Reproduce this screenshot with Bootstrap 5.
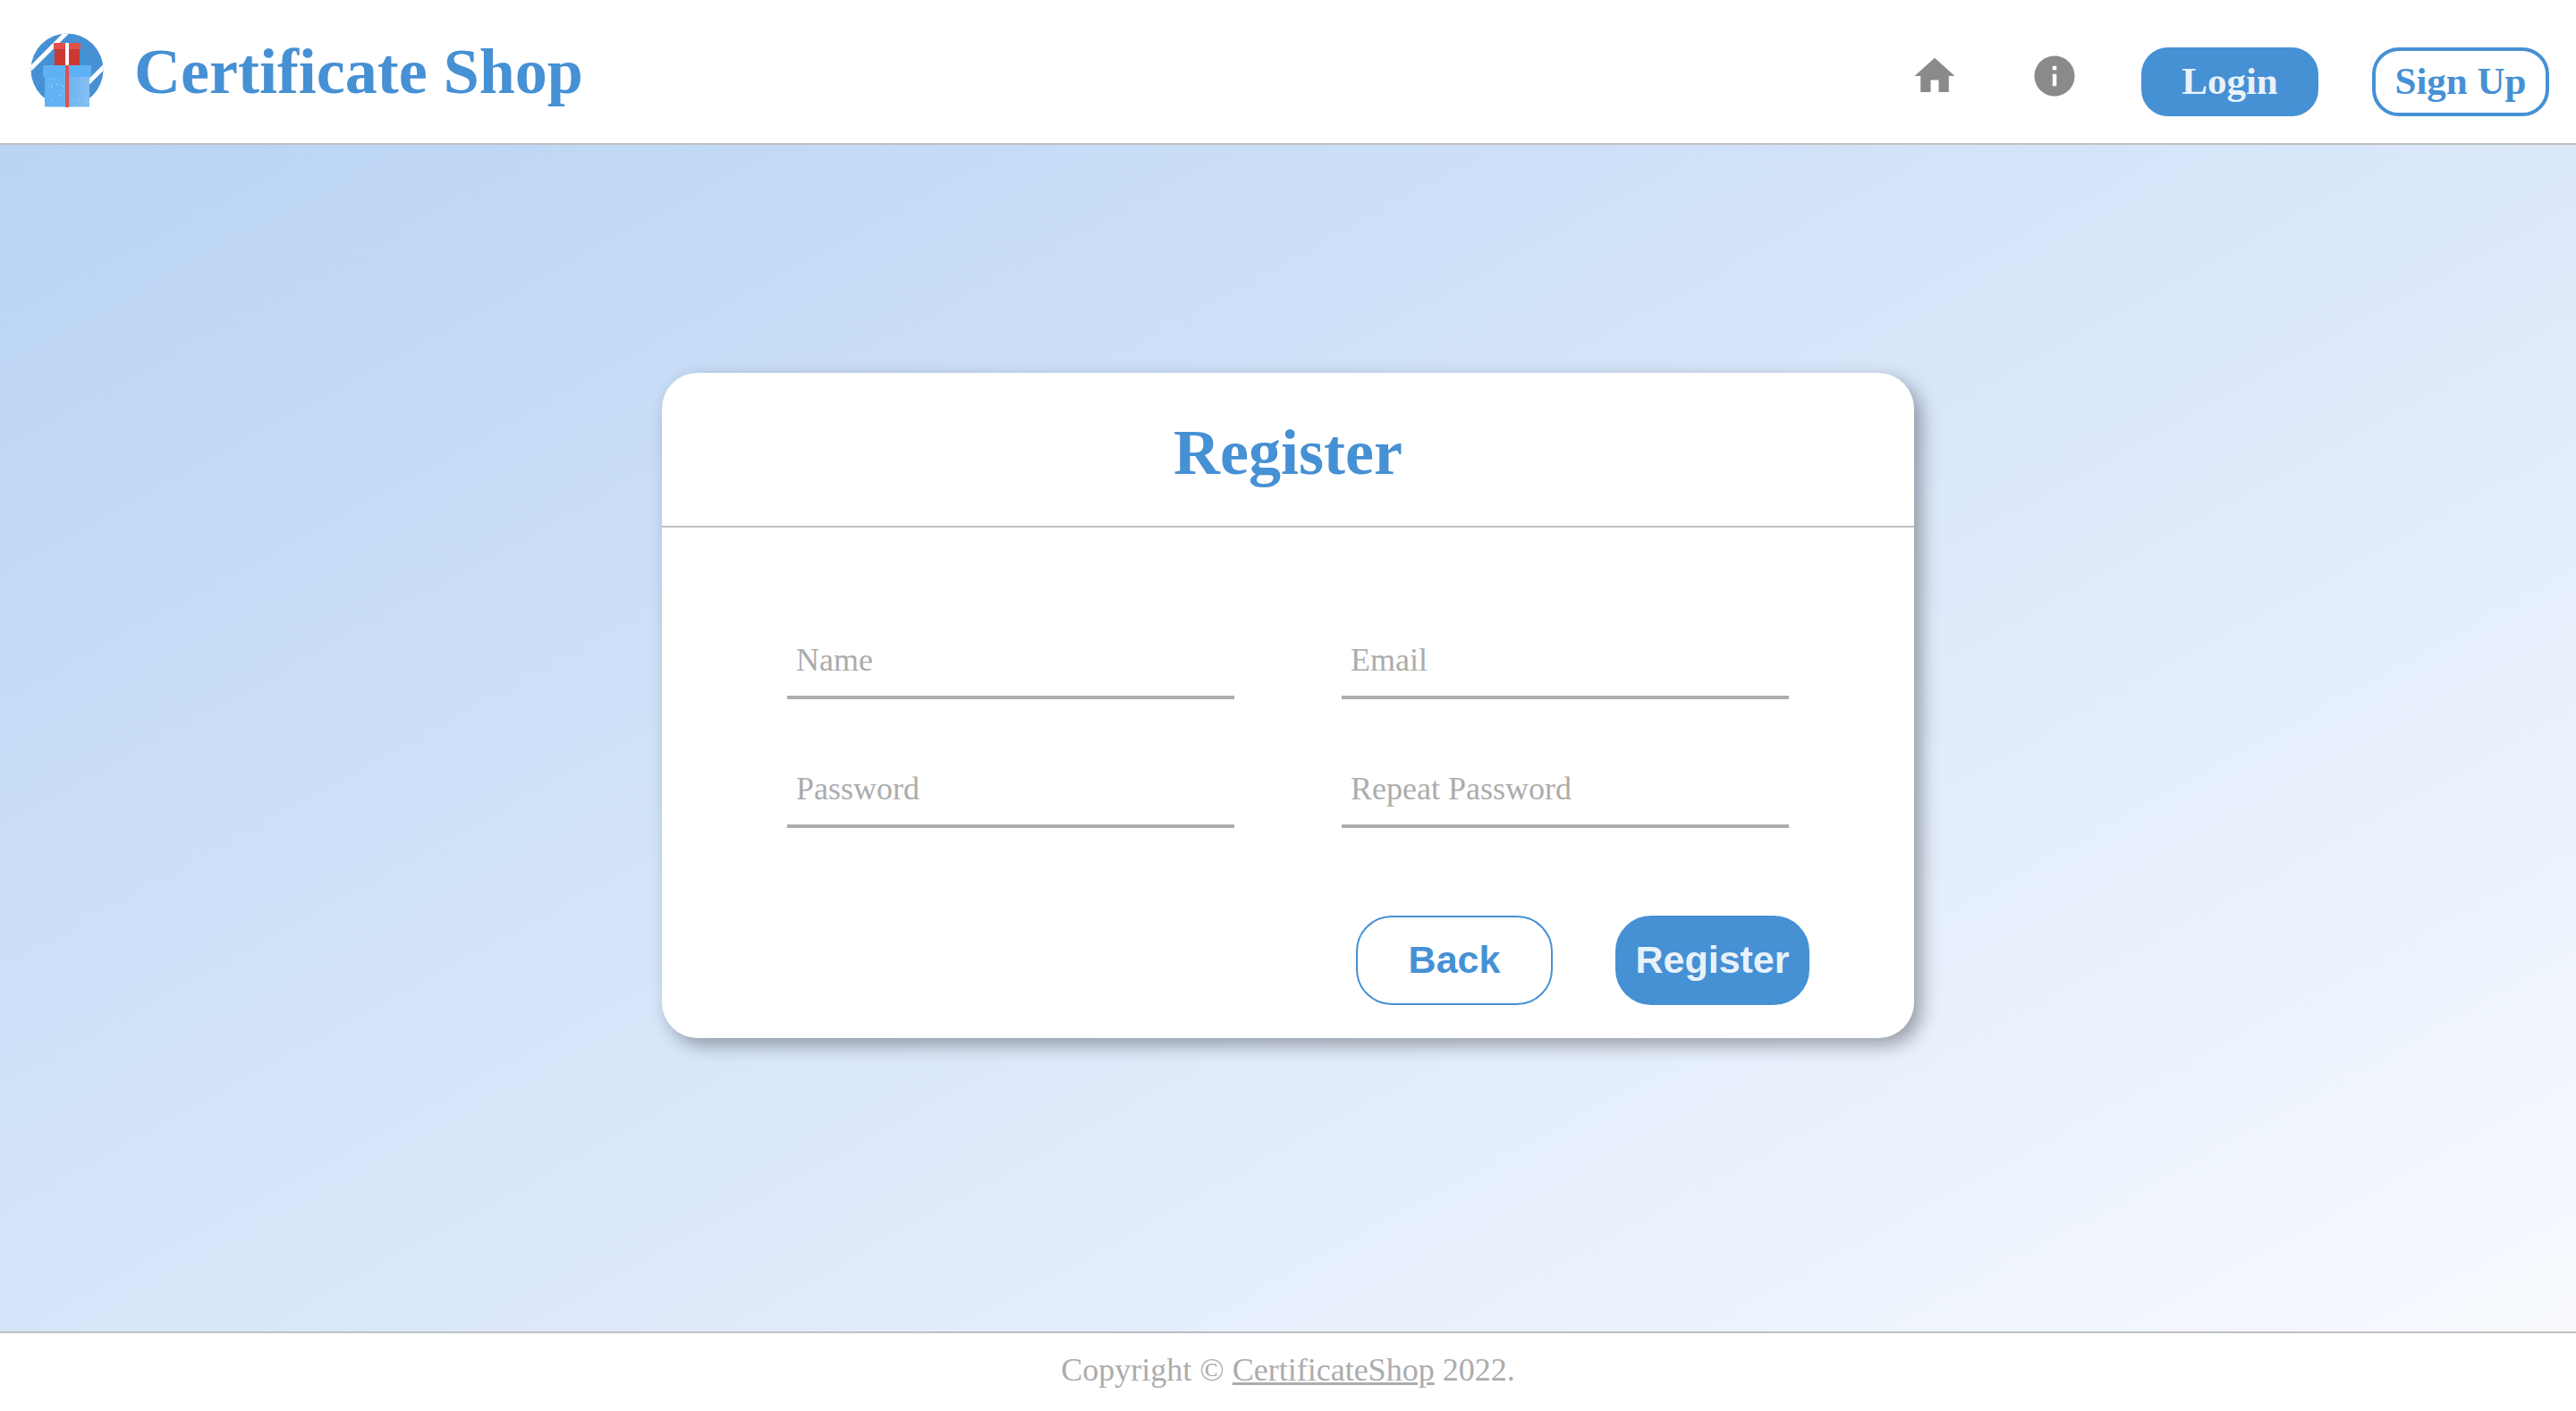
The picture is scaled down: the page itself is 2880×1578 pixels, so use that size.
<!DOCTYPE html>
<html lang="en">
<head>
<meta charset="utf-8">
<meta name="viewport" content="width=device-width, initial-scale=1">
<title>Certificate Shop – Register</title>
<link rel="stylesheet" href="https://cdn.jsdelivr.net/npm/bootstrap@5.3.0/dist/css/bootstrap.min.css">
<style>
  :root { --brand: #4690d4; --line: #c0c0c0; --muted: #acacac; --on-brand: #e9f2fb; }
  body {
    font-family: "Liberation Serif", "Times New Roman", serif;
    background: linear-gradient(to bottom right, #b5d1f3, #fafbff);
  }
  .site-header { height: 162px; padding: 0 30px; border-bottom: 2px solid var(--line); }
  .brand-link { gap: 30px; color: var(--brand); font-size: 72px; line-height: 80px; }
  .brand-link svg { width: 90px; height: 90px; }
  .site-nav { gap: 60px; padding-top: 22px; }
  .icon-set { gap: 80px; margin: 0 10px 12px 0; }
  .icon-set svg { width: 54px; height: 54px; fill: #8b8989; display: block; }
  .btn-pill {
    width: 198px; height: 77px; padding: 0; font-size: 43px; line-height: 60px;
    border: 4px solid var(--brand); border-radius: 30px;
  }
  .btn-brand, .btn-brand:hover { background: var(--brand); border-color: var(--brand); color: var(--on-brand); }
  .btn-line { border-color: var(--brand); color: var(--brand); background: #fff; }
  .page-main { padding: 0 30px 73px; }
  .register-card {
    width: 100%; max-width: 1400px; border: 0; border-radius: 40px;
    box-shadow: 8px 8px 20px rgba(0, 0, 0, .34);
  }
  .register-head { padding: 49px 0 42px; border-bottom: 2px solid var(--line); }
  .register-head h1 { color: var(--brand); font-size: 72px; line-height: 80px; }
  .register-form { padding: 112px 117px 37px 140px; }
  .field-grid { display: grid; grid-template-columns: 1fr 1fr; gap: 64px 120px; padding-right: 23px; }
  .field-line, .field-line:focus {
    height: 80px; padding: 0 10px 4px; font-size: 36px; line-height: 44px; border: 0;
    border-bottom: 4px solid var(--muted); border-radius: 0; background: transparent; box-shadow: none;
  }
  .field-line::placeholder { color: var(--muted); }
  .form-actions { gap: 70px; margin-top: 98px; }
  .btn-form {
    min-width: 217px; height: 100px; padding: 0 18px 2px; border-width: 2px; border-radius: 40px;
    font-family: "Liberation Sans", Arial, sans-serif; font-size: 43px; line-height: 60px;
  }
  .btn-back { min-width: 220px; }
  .site-footer {
    height: 89px; padding-bottom: 6px; border-top: 2px solid var(--line); color: var(--muted);
    font-size: 36px; line-height: 44px;
  }
  .site-footer a { color: inherit; }
</style>
<script src="https://cdn.jsdelivr.net/npm/bootstrap@5.3.0/dist/js/bootstrap.bundle.min.js" defer></script>
</head>
<body class="min-vh-100 d-flex flex-column">
<header class="site-header bg-white d-flex align-items-center justify-content-between">
  <a class="brand-link d-flex align-items-center fw-bold text-decoration-none" href="#">
    <svg viewBox="0 0 90 90" aria-hidden="true">
      <defs>
        <clipPath id="disc"><circle cx="45" cy="43" r="40.500"/></clipPath>
        <linearGradient id="box"><stop offset=".4" stop-color="#63b2f5"/><stop offset="1" stop-color="#86bff1"/></linearGradient>
      </defs>
      <g clip-path="url(#disc)">
        <path fill="#4690d4" d="M0 0h90v90H0z"/>
        <path stroke="#fff" stroke-width="5" d="M0 46 48-2M64 62l26-26"/>
      </g>
      <path fill="#cc3932" d="M31 19h28v20H31z"/>
      <path fill="#b83e3c" d="M31 19h28v3H31z"/>
      <path fill="#e4504a" d="M30 13h30v7H30z"/>
      <path fill="#fff" d="M43 13h4v26h-4z"/>
      <path fill="url(#box)" d="M20 51h50v34H20z"/>
      <path fill="#5fb1f5" d="M18 38h54v13H18z"/>
      <path fill="#e4504a" d="M43 38h4v47h-4z"/>
      <path fill="#b9dcfa" d="M25 52h1v1h-1zM29 53h1v1h-1zM24 61h1v1h-1zM28 60h1v1h-1zM33 59h1v1h-1zM38 59h1v1h-1zM40 61h1v1h-1zM39 67h1v1h-1zM27 62h1v1h-1zM37 71h1v1h-1zM35 74h1v1h-1zM28 77h1v1h-1zM50 76h1v1h-1zM57 77h1v1h-1zM67 79h1v1h-1zM20 84h23v1H20zM47 84h23v1H47z"/>
    </svg>
    <span>Certificate Shop</span>
  </a>
  <nav class="site-nav d-flex align-items-center" aria-label="Main">
    <div class="icon-set d-flex">
      <a href="#" aria-label="Home"><svg viewBox="0 0 24 24"><path d="M10 20v-6h4v6h5v-8h3L12 3 2 12h3v8z"/></svg></a>
      <a href="#" aria-label="About"><svg viewBox="0 0 24 24"><path d="M12 2C6.480 2 2 6.480 2 12s4.480 10 10 10 10-4.480 10-10S17.520 2 12 2zm1 15h-2v-6h2v6zm0-8h-2V7h2v2z"/></svg></a>
    </div>
    <button type="button" class="btn btn-pill btn-brand fw-bold">Login</button>
    <button type="button" class="btn btn-pill btn-line fw-bold">Sign Up</button>
  </nav>
</header>

<main class="page-main flex-grow-1 d-flex align-items-center justify-content-center">
  <section class="register-card card">
    <div class="register-head text-center"><h1 class="fw-bold m-0">Register</h1></div>
    <form class="register-form">
      <div class="field-grid">
        <input class="form-control field-line" type="text" placeholder="Name" aria-label="Name">
        <input class="form-control field-line" type="email" placeholder="Email" aria-label="Email">
        <input class="form-control field-line" type="password" placeholder="Password" aria-label="Password">
        <input class="form-control field-line" type="password" placeholder="Repeat Password" aria-label="Repeat Password">
      </div>
      <div class="form-actions d-flex justify-content-end">
        <button type="button" class="btn btn-form btn-back btn-line fw-bold">Back</button>
        <button type="submit" class="btn btn-form btn-brand fw-bold">Register</button>
      </div>
    </form>
  </section>
</main>

<footer class="site-footer bg-white d-flex align-items-center justify-content-center">
  <p class="m-0">Copyright © <a href="#">CertificateShop</a> 2022.</p>
</footer>
</body>
</html>
